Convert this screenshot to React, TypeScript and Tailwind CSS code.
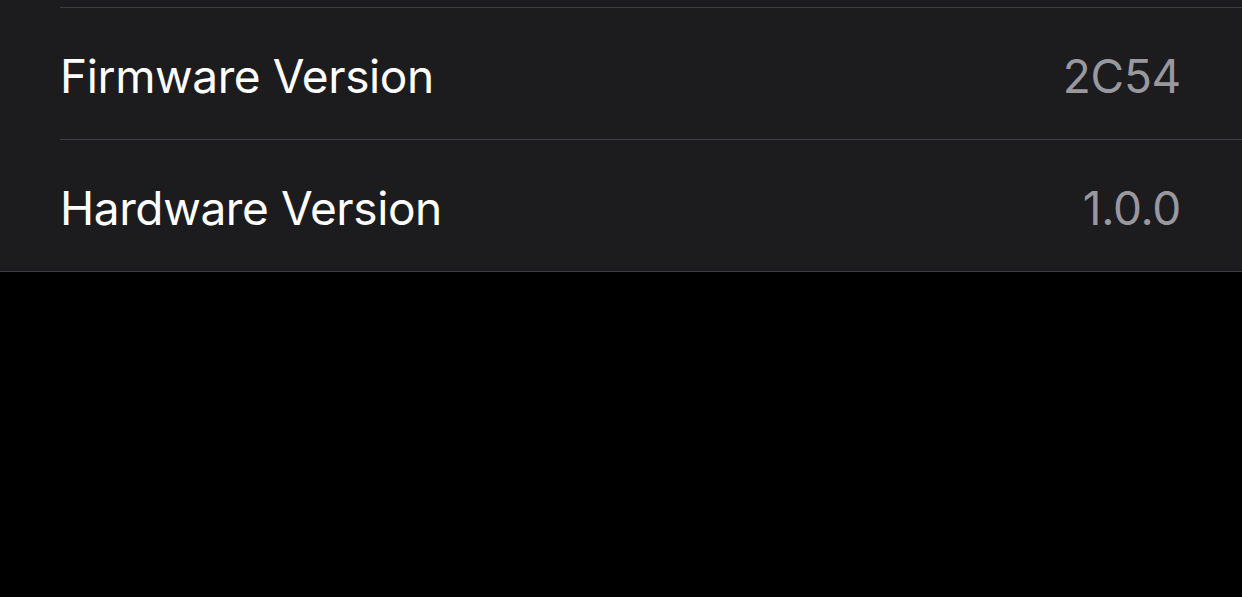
import React from "react";

const rows = [
  { label: "Firmware Version", value: "2C54" },
  { label: "Hardware Version", value: "1.0.0" },
];

export default function App() {
  return (
    <div
      className="w-[1242px] h-[597px] bg-black overflow-hidden"
      style={{ fontFamily: "Inter, 'Noto Sans', sans-serif" }}
    >
      <div className="bg-[#1c1c1e] border-b border-[#3d3d41]">
        <div className="h-[7px]" />
        {rows.map((r) => (
          <div key={r.label} className="pl-[60px]">
            <div className="border-t border-[#3d3d41] h-[132px] flex items-center justify-between pr-[61px] pt-[5px]">
              <span className="text-[46px] leading-none text-white tracking-[-0.4px]">{r.label}</span>
              <span className="text-[46px] leading-none text-[#98989e] tracking-[-0.3px]">{r.value}</span>
            </div>
          </div>
        ))}
      </div>
    </div>
  );
}
